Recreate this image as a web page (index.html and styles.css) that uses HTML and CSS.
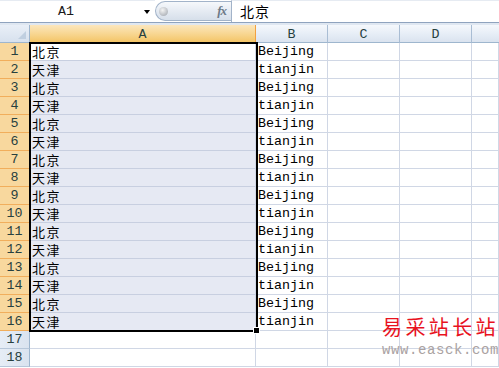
FILE: index.html
```html
<!DOCTYPE html>
<html lang="zh">
<head>
<meta charset="utf-8">
<title>Excel</title>
<link rel="stylesheet" href="styles.css">
</head>
<body>
<div class="app">
  <div class="fbar">
    <div class="namebox"><span class="ref">A1</span><span class="arrow"></span></div>
    <div class="pill"><span class="knob"></span><span class="fx">fx</span></div>
    <div class="finput">北京</div>
  </div>
  <div class="strip"></div>
  <div class="sheet">
    <div class="grid">
      <div class="corner"><span class="tri"></span></div>
      <div class="ch chsel">A</div><div class="ch">B</div><div class="ch">C</div><div class="ch">D</div><div class="ch chlast"></div>

      <div class="rh rhsel">1</div><div class="c ca active zh">北京</div><div class="c en">Beijing</div><div class="c"></div><div class="c"></div><div class="c"></div>
      <div class="rh rhsel">2</div><div class="c ca zh">天津</div><div class="c en">tianjin</div><div class="c"></div><div class="c"></div><div class="c"></div>
      <div class="rh rhsel">3</div><div class="c ca zh">北京</div><div class="c en">Beijing</div><div class="c"></div><div class="c"></div><div class="c"></div>
      <div class="rh rhsel">4</div><div class="c ca zh">天津</div><div class="c en">tianjin</div><div class="c"></div><div class="c"></div><div class="c"></div>
      <div class="rh rhsel">5</div><div class="c ca zh">北京</div><div class="c en">Beijing</div><div class="c"></div><div class="c"></div><div class="c"></div>
      <div class="rh rhsel">6</div><div class="c ca zh">天津</div><div class="c en">tianjin</div><div class="c"></div><div class="c"></div><div class="c"></div>
      <div class="rh rhsel">7</div><div class="c ca zh">北京</div><div class="c en">Beijing</div><div class="c"></div><div class="c"></div><div class="c"></div>
      <div class="rh rhsel">8</div><div class="c ca zh">天津</div><div class="c en">tianjin</div><div class="c"></div><div class="c"></div><div class="c"></div>
      <div class="rh rhsel">9</div><div class="c ca zh">北京</div><div class="c en">Beijing</div><div class="c"></div><div class="c"></div><div class="c"></div>
      <div class="rh rhsel">10</div><div class="c ca zh">天津</div><div class="c en">tianjin</div><div class="c"></div><div class="c"></div><div class="c"></div>
      <div class="rh rhsel">11</div><div class="c ca zh">北京</div><div class="c en">Beijing</div><div class="c"></div><div class="c"></div><div class="c"></div>
      <div class="rh rhsel">12</div><div class="c ca zh">天津</div><div class="c en">tianjin</div><div class="c"></div><div class="c"></div><div class="c"></div>
      <div class="rh rhsel">13</div><div class="c ca zh">北京</div><div class="c en">Beijing</div><div class="c"></div><div class="c"></div><div class="c"></div>
      <div class="rh rhsel">14</div><div class="c ca zh">天津</div><div class="c en">tianjin</div><div class="c"></div><div class="c"></div><div class="c"></div>
      <div class="rh rhsel">15</div><div class="c ca zh">北京</div><div class="c en">Beijing</div><div class="c"></div><div class="c"></div><div class="c"></div>
      <div class="rh rhsel">16</div><div class="c ca zh">天津</div><div class="c en">tianjin</div><div class="c"></div><div class="c"></div><div class="c"></div>
      <div class="rh">17</div><div class="c"></div><div class="c"></div><div class="c"></div><div class="c"></div><div class="c"></div>
      <div class="rh">18</div><div class="c"></div><div class="c"></div><div class="c"></div><div class="c"></div><div class="c"></div>
    </div>
    <div class="selection"><span class="handle"></span></div>
  </div>
  <div class="watermark">
    <div class="wm-cn">易采站长站</div>
    <div class="wm-en">www.easck.com</div>
  </div>
</div>
</body>
</html>
```

FILE: styles.css
```css
html, body {
  margin: 0;
  padding: 0;
  background: #ffffff;
}
.app {
  position: relative;
  width: 499px;
  height: 368px;
  overflow: hidden;
  font-family: "Liberation Mono", "DejaVu Sans Mono", monospace;
}
.fbar {
  display: flex;
  height: 23px;
  box-sizing: border-box;
  border-bottom: 1px solid #8fa3be;
  background: #ffffff;
}
.namebox {
  width: 155px;
  display: flex;
  align-items: center;
  position: relative;
  border-top: 1px solid #e6ebf2;
  box-sizing: border-box;
}
.ref {
  margin-left: 58px;
  font-size: 13.33px;
  color: #1a1a1a;
  line-height: 20px;
}
.arrow {
  margin-left: 70px;
  width: 0;
  height: 0;
  border-left: 3px solid transparent;
  border-right: 3px solid transparent;
  border-top: 4px solid #000;
}
.pill {
  width: 76px;
  height: 20px;
  margin-top: 1px;
  box-sizing: border-box;
  border: 1px solid #a2b3c9;
  border-right: none;
  border-radius: 10px 0 0 10px;
  background: linear-gradient(#f6f8fb, #e4eaf2 55%, #d6dfea);
  display: flex;
  align-items: center;
}
.knob {
  width: 9px;
  height: 9px;
  margin-left: 3px;
  border-radius: 50%;
  background: radial-gradient(circle at 40% 35%, #f4f4f4, #b5b9bf 70%, #9aa0a8);
}
.fx {
  margin-left: auto;
  margin-right: 5px;
  font-family: "Liberation Serif", serif;
  font-style: italic;
  font-weight: bold;
  font-size: 13px;
  color: #6d7a88;
  letter-spacing: -1px;
}
.finput {
  flex: 1;
  border-left: 1px solid #a2b3c9;
  border-top: 1px solid #e6ebf2;
  font-family: "Noto Sans CJK SC", sans-serif;
  font-size: 14px;
  letter-spacing: 1px;
  line-height: 21px;
  padding-left: 8px;
  color: #000;
}
.strip {
  height: 2px;
  background: #dfe7f1;
}
.sheet {
  position: relative;
}
.grid {
  display: grid;
  grid-template-columns: 30px 226px 72px 72px 72px 1fr;
  grid-auto-rows: 18px;
}
.corner {
  box-sizing: border-box;
  border-right: 1px solid #9eb6ce;
  border-bottom: 1px solid #9eb6ce;
  background: linear-gradient(#e9eff7, #d7e1ee);
  position: relative;
}
.tri {
  position: absolute;
  right: 3px;
  bottom: 3px;
  width: 0;
  height: 0;
  border-left: 8px solid transparent;
  border-bottom: 8px solid #c0cfe0;
}
.ch {
  box-sizing: border-box;
  border-right: 1px solid #a9bdd4;
  border-bottom: 1px solid #9eb6ce;
  background: linear-gradient(#f5f8fc, #e6edf6 55%, #dae3ef);
  font-size: 13.33px;
  color: #27403f;
  text-align: center;
  line-height: 19px;
}
.chsel {
  background: linear-gradient(#fbe6bd, #f8d793 50%, #f4c567);
  border-right: 1px solid #f2a141;
  border-bottom: 1px solid #f29436;
}
.chlast {
  border-right: none;
}
.rh {
  box-sizing: border-box;
  border-right: 1px solid #9eb6ce;
  border-bottom: 1px solid #b7c7da;
  background: linear-gradient(90deg, #e6edf6, #dae3ef);
  font-size: 13.33px;
  color: #27403f;
  text-align: center;
  line-height: 18px;
}
.rhsel {
  background: #f8d89e;
  border-right: 1px solid #f29436;
  border-bottom: 1px solid #f1ae5c;
}
.c {
  box-sizing: border-box;
  border-right: 1px solid #d0d7e5;
  border-bottom: 1px solid #d0d7e5;
  background: #ffffff;
  white-space: nowrap;
  overflow: visible;
  padding-left: 2px;
}
.ca {
  background: #e6e9f3;
  border-bottom-color: #c8cfe0;
}
.ca.active {
  background: #ffffff;
}
.zh {
  font-family: "Noto Sans CJK SC", sans-serif;
  font-size: 13px;
  letter-spacing: 1.5px;
  line-height: 17px;
  color: #000;
}
.en {
  font-family: "Liberation Mono", monospace;
  font-size: 13.33px;
  line-height: 18px;
  color: #000;
}
.selection {
  position: absolute;
  left: 29px;
  top: 17px;
  width: 229px;
  height: 290px;
  box-sizing: border-box;
  border: 2px solid #000;
  pointer-events: none;
}
.handle {
  position: absolute;
  right: -4px;
  bottom: -4px;
  width: 5px;
  height: 5px;
  background: #000;
  border: 1px solid #fff;
}
.watermark {
  position: absolute;
  left: 382px;
  top: 313px;
  width: 117px;
}
.wm-cn {
  font-family: "Noto Sans CJK SC", sans-serif;
  font-size: 20px;
  line-height: 28px;
  letter-spacing: 3.4px;
  color: #e8121e;
  white-space: nowrap;
}
.wm-en {
  font-family: "Liberation Mono", monospace;
  font-size: 14px;
  line-height: 18px;
  letter-spacing: 0.6px;
  color: #aaa2a2;
  white-space: nowrap;
}
```
